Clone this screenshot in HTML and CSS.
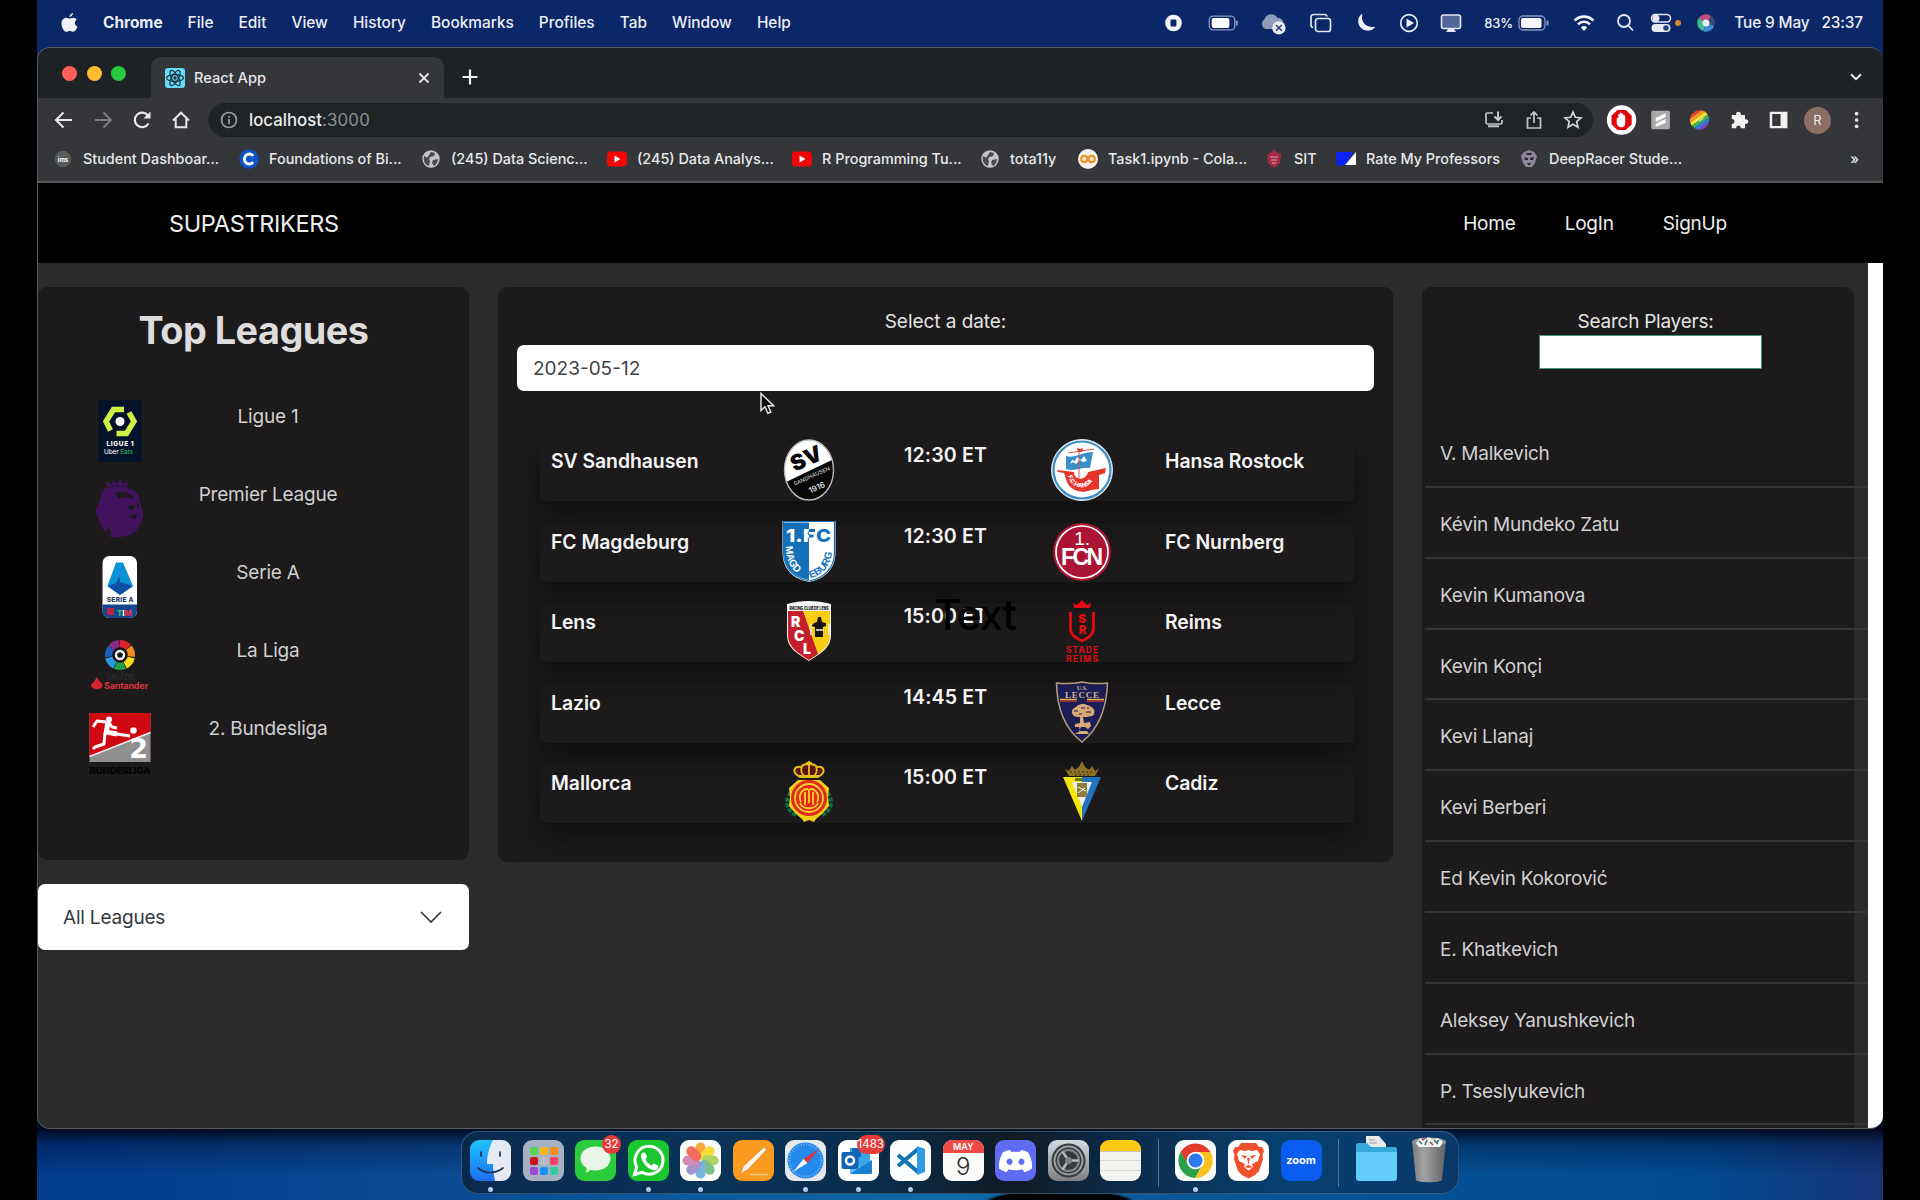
FILE: index.html
```html
<!DOCTYPE html>
<html lang="en">
<head>
<meta charset="utf-8">
<title>React App</title>
<link rel="stylesheet" href="styles.css">
</head>
<body>
<div class="desktop">
  <header class="menubar">
    <nav class="menus">
      <svg class="apple" viewBox="0 0 17 20"><path fill="#eef0f6" d="M12 0c.1 1.700-1.300 3.900-3.500 4.100C8.300 2.300 10.100.3 12 0zM8.700 5.600c.8 0 2-.9 3.700-.9 1.400 0 2.700.8 3.500 1.900-3 1.800-2.500 5.800.6 7-.8 2.300-2.500 5.200-4.300 5.200-1.300 0-1.800-.8-3.400-.8s-2.200.8-3.400.8C3.300 18.800.500 14.700.5 10.700.5 6.900 2.900 4.800 5.300 4.800c1.500 0 2.600.8 3.400.8z"/></svg>
      <b>Chrome</b><span>File</span><span>Edit</span><span>View</span><span>History</span><span>Bookmarks</span><span>Profiles</span><span>Tab</span><span>Window</span><span>Help</span>
    </nav>
    <div class="status">
      <svg class="w50" viewBox="-25 -12 50 24"><circle r="8.500" fill="#f2f4f8"/><rect x="-3" y="-3.500" width="6" height="7" rx="1" fill="#0b2767"/></svg>
      <svg class="w50" viewBox="-25 -12 50 24"><rect x="-13.500" y="-7" width="26" height="14" rx="4" fill="none" stroke="#8b99bd" stroke-width="1.300"/><rect x="-11" y="-5" width="18" height="10" rx="2" fill="#fff"/><path d="M14.500-2.500v5" stroke="#8b99bd" stroke-width="2"/></svg>
      <svg class="w50 cloud" viewBox="-25 -12 50 24"><path fill="#8f9cb9" d="M-8 6a5.500 5.500 0 0 1-1-10A7 7 0 0 1 4-5a5 5 0 0 1 6 5v6z"/><circle cx="5.500" cy="5" r="6.800" fill="#e8ecf4"/><path d="M2.500 2l6 6m0-6l-6 6" stroke="#223a72" stroke-width="1.500"/></svg>
      <svg class="w46" viewBox="-23 -12 46 24"><g fill="none" stroke="#dfe4ef" stroke-width="1.700"><rect x="-5.500" y="-4.500" width="15" height="13" rx="2.500"/><path d="M-8 4.500a2.500 2.500 0 0 1-2-2.500v-8a2.500 2.500 0 0 1 2.500-2.500h11A2.500 2.500 0 0 1 6-6.500"/></g></svg>
      <svg class="w44" viewBox="-22 -12 44 24"><path fill="#eef1f7" d="M-4.500-8A8.500 8.500 0 1 0 8 4.500 10.500 10.500 0 0 1-4.500-8z" stroke="#eef1f7" stroke-width="1.500" stroke-linejoin="round"/></svg>
      <svg class="w42" viewBox="-21 -12 42 24"><circle r="8.300" fill="none" stroke="#e8ecf4" stroke-width="1.700"/><path fill="#eef1f7" d="M-2.500-4.500L5 0l-7.500 4.500z"/></svg>
      <svg class="w42" viewBox="-21 -12 42 24"><rect x="-9.500" y="-8" width="19" height="13.500" rx="2" fill="#50669a" stroke="#e1e6f0" stroke-width="1.600"/><path fill="#e1e6f0" d="M-3 6h6l2 3h-10z"/></svg>
      <span class="pct">83%</span>
      <svg class="bat" viewBox="-17 -12 34 24"><rect x="-14" y="-7" width="26" height="14" rx="4" fill="none" stroke="#8b99bd" stroke-width="1.300"/><rect x="-12" y="-5" width="20.500" height="10" rx="2" fill="#f6f7fb"/><path d="M14.500-2.500v5" stroke="#8b99bd" stroke-width="2"/></svg>
      <svg class="wifi" viewBox="-21 -12 42 24"><g fill="none" stroke="#f0f2f8" stroke-width="2.600"><path d="M-9.500-2.500a13.500 13.500 0 0 1 19 0"/><path d="M-6 1.300a8.500 8.500 0 0 1 12 0"/></g><path fill="#f0f2f8" d="M-3.200 4.400a4.700 4.700 0 0 1 6.400 0L0 8z"/></svg>
      <svg class="w38" viewBox="-19 -12 38 24"><g fill="none" stroke="#e6e9f2" stroke-width="1.800"><circle cx="-1" cy="-2" r="6"/><path d="M3.300 2.500L8 7.500"/></g></svg>
      <svg class="ctl" viewBox="-19 -12 50 24"><rect x="-9.500" y="-8.500" width="19" height="7.500" rx="3.700" fill="none" stroke="#e6e9f2" stroke-width="1.500"/><circle cx="-5" cy="-4.700" r="3.500" fill="#e6e9f2"/><rect x="-9.500" y="1" width="19" height="8" rx="4" fill="#e6e9f2"/><circle cx="5" cy="5" r="2.700" fill="#25417e"/><circle cx="17" cy="0" r="3" fill="#d98a2b"/></svg>
      <svg class="siri" viewBox="-14 -12 28 24"><circle r="9" fill="#384a6b"/><path d="M0 0L-7-5A8.500 8.500 0 0 1 5-7z" fill="#c34a78"/><path d="M0 0L-7-5A8.500 8.500 0 0 0-3 8z" fill="#3fbf8a"/><path d="M0 0L-3 8A8.500 8.500 0 0 0 8 3z" fill="#3d8bd6"/><circle r="3.500" fill="#e7edf4"/></svg>
      <span class="date">Tue 9 May</span><span>23:37</span>
    </div>
  </header>

  <main class="window">
    <div class="tabstrip">
      <div class="lights"><i class="red"></i><i class="amber"></i><i class="green"></i></div>
      <div class="tab">
        <svg class="fav" viewBox="0 0 20 20"><rect width="20" height="20" rx="3" fill="#61dafb"/><g fill="none" stroke="#20343c" stroke-width="1.200"><ellipse cx="10" cy="10" rx="8.500" ry="3.300"/><ellipse cx="10" cy="10" rx="8.500" ry="3.300" transform="rotate(60 10 10)"/><ellipse cx="10" cy="10" rx="8.500" ry="3.300" transform="rotate(120 10 10)"/></g><circle cx="10" cy="10" r="1.700" fill="#20343c"/></svg>
        <span>React App</span>
        <svg class="close" viewBox="0 0 12 12"><path d="M1.500 1.500l9 9m0-9l-9 9" stroke="#e3e4e6" stroke-width="1.800"/></svg>
      </div>
      <svg class="plus" viewBox="0 0 16 16"><path d="M8 .500v15M.5 8h15" stroke="#f1f1f1" stroke-width="2.200"/></svg>
      <svg class="chev" viewBox="0 0 12 8"><path d="M1 1.200l5 5 5-5" fill="none" stroke="#e8e8e8" stroke-width="2"/></svg>
    </div>

    <div class="toolbar">
      <svg class="tool" viewBox="-12 -12 24 24"><path d="M8 0H-7M-.5-7.500L-8 0l7.500 7.500" fill="none" stroke="#e6e7e9" stroke-width="2"/></svg>
      <svg class="tool" viewBox="-12 -12 24 24"><path d="M-8 0H7M.5-7.500L8 0 .5 7.500" fill="none" stroke="#7c7e82" stroke-width="1.800"/></svg>
      <svg class="tool" viewBox="-12 -12 24 24"><path d="M6.500 3.500A7.300 7.300 0 1 1 6-4.500" fill="none" stroke="#e6e7e9" stroke-width="2.200"/><path d="M8.500-8.500v7h-7z" fill="#e6e7e9"/></svg>
      <svg class="tool" viewBox="-12 -12 24 24"><path d="M-8 .500L0-7.300 8 .5M-5.300-1v8.200H5.300V-1" fill="none" stroke="#e6e7e9" stroke-width="2"/></svg>
      <div class="omnibox">
        <svg class="info" viewBox="-9 -9 18 18"><circle r="7.500" fill="none" stroke="#9a9da1" stroke-width="1.700"/><path d="M0-1v5M0-4v1.800" stroke="#9a9da1" stroke-width="1.800"/></svg>
        <span class="host">localhost</span><span class="port">:3000</span>
        <div class="omni-icons">
          <svg viewBox="-12 -12 24 24"><path d="M-1-7h-5.500a1.500 1.500 0 0 0-1.500 1.500v8A1.500 1.500 0 0 0-6.500 4h13A1.500 1.500 0 0 0 8 2.500V0" fill="none" stroke="#c4c6c9" stroke-width="1.700"/><path d="M-6 6.300h11M4-8.500v8M.500-3.500L4 0l3.500-3.500" fill="none" stroke="#c4c6c9" stroke-width="2"/></svg>
          <svg viewBox="-12 -12 24 24"><path d="M-3-2h-3.500V8h13V-2H3M0 3V-7.500M-3.500-4.500L0-8l3.500 3.500" fill="none" stroke="#c4c6c9" stroke-width="1.700"/></svg>
          <svg viewBox="-12 -12 24 24"><path d="M0-8L2.300-2.700 8-2.200 3.700 1.600 5 7.200 0 4.200-5 7.200-3.700 1.600-8-2.200-2.300-2.700z" fill="none" stroke="#d2d3d5" stroke-width="1.700"/></svg>
        </div>
      </div>
      <div class="ext">
        <svg viewBox="-20 -16 40 32"><circle r="15" fill="#fff"/><path fill="#e10808" d="M-4.300-10.300h8.600l6 6v8.600l-6 6h-8.600l-6-6v-8.600z"/><path fill="#fff" d="M-5-1.500c0-1.200 1.600-1.200 1.600 0v-3.800c0-1.300 1.700-1.300 1.700 0v-1.200c0-1.400 1.900-1.400 1.900 0v1c0-1.300 1.800-1.300 1.800 0v1.500c0-1.200 1.700-1.200 1.700 0v7C3.700 6 2 7.500 0 7.500S-5 5.500-5 3z"/></svg>
        <svg viewBox="-20 -16 40 32"><rect x="-9.500" y="-9.500" width="19" height="19" rx="1.500" fill="#a7a9ab"/><path fill="#fff" d="M5-7L-5-2v4L5-3zM5-1L-5 4v3L5 3z"/></svg>
        <svg viewBox="-20 -16 40 32"><g stroke-width="3.500" transform="rotate(-35)"><clipPath id="rb"><circle r="10"/></clipPath><g clip-path="url(#rb)"><path d="M-12-8.500h24" stroke="#e8442e"/><path d="M-12-5h24" stroke="#f59a23"/><path d="M-12-1.600h24" stroke="#f6e339"/><path d="M-12 1.800h24" stroke="#43b649"/><path d="M-12 5.200h24" stroke="#2f7de0"/><path d="M-12 8.600h24" stroke="#8e3fc0"/></g></g><path d="M-4 2l2-3 2 2 4-3" stroke="#f4f4d0" fill="none"/></svg>
        <svg viewBox="-20 -16 40 32"><path fill="#f1f1f2" d="M-8-5h4.500C-4.500-9.500 2-9.500 1.200-5H5.500v4.300c4.500-.8 4.500 5.500 0 4.700V8.500H1.200C1.700 4.500-3.800 4.500-3.400 8.500H-8V4C-4.300 4-4.300-1-8-1z"/></svg>
        <svg viewBox="-20 -16 40 32"><path fill="#f1f1f2" fill-rule="evenodd" d="M-9-8.500H9v17H-9zM-6.500-6v12H2V-6z"/></svg>
        <span class="avatar">R</span>
        <svg viewBox="-20 -16 40 32"><g fill="#e3e4e6"><circle cy="-6.500" r="1.900"/><circle r="1.900"/><circle cy="6.500" r="1.900"/></g></svg>
      </div>
    </div>

    <div class="bookmarks">
      <div class="bm"><svg viewBox="-10 -10 20 20"><circle r="8.300" fill="#58595a"/><text class="t-ims" y="2.500" text-anchor="middle">ims</text></svg><span style="width:136px">Student Dashboar...</span></div>
      <div class="bm"><svg viewBox="-10 -10 20 20"><circle r="9.800" fill="#0b53c6"/><path d="M4.200-3.200a5 5 0 1 0 0 6.400" fill="none" stroke="#fff" stroke-width="2.800"/></svg><span style="width:132px">Foundations of Bi...</span></div>
      <div class="bm"><svg viewBox="-10 -10 20 20"><circle r="8.700" fill="#c3c5c8"/><path fill="#4a4b4f" d="M-7-3l4 2 2 3-1 5c-4-1-6-5-5-10zM0-7l4 1-1 3-4 1-1 3-2-2zM2 1l5-1c0 3-2 6-4 7L1 4z"/></svg><span style="width:136px">(245) Data Scienc...</span></div>
      <div class="bm"><svg viewBox="-10 -10 20 20"><rect x="-10" y="-7.500" width="20" height="15" rx="4" fill="#f40505"/><path fill="#fff" d="M-2.500-3.500L3.500 0l-6 3.500z"/></svg><span style="width:135px">(245) Data Analys...</span></div>
      <div class="bm"><svg viewBox="-10 -10 20 20"><rect x="-10" y="-7.500" width="20" height="15" rx="4" fill="#f40505"/><path fill="#fff" d="M-2.500-3.500L3.500 0l-6 3.500z"/></svg><span style="width:138px">R Programming Tu...</span></div>
      <div class="bm"><svg viewBox="-10 -10 20 20"><circle r="8.700" fill="#c3c5c8"/><path fill="#4a4b4f" d="M-7-3l4 2 2 3-1 5c-4-1-6-5-5-10zM0-7l4 1-1 3-4 1-1 3-2-2zM2 1l5-1c0 3-2 6-4 7L1 4z"/></svg><span style="width:48px">tota11y</span></div>
      <div class="bm"><svg viewBox="-10 -10 20 20"><circle r="10" fill="#f6f1ec"/><g fill="none" stroke="#f0921e" stroke-width="2.200"><circle cx="-3.700" r="3.200"/><circle cx="3.700" r="3.200"/></g></svg><span style="width:136px">Task1.ipynb - Cola...</span></div>
      <div class="bm"><svg viewBox="-10 -10 20 20"><path fill="#a52a48" d="M-1-8l1-2 2 3 5 2-1 9-6 5-6-5-1-8z"/><path stroke="#d8a4b2" d="M-4-2h8M-3 1h6M-2 4h4"/></svg><span style="width:22px">SIT</span></div>
      <div class="bm"><svg viewBox="-10 -10 20 20"><path fill="#0a22f5" d="M-10-7H7L0 6-9 7z"/><path fill="#fff" d="M10-7v13H-1z"/></svg><span style="width:133px">Rate My Professors</span></div>
      <div class="bm"><svg viewBox="-10 -10 20 20"><path fill="#8d8797" d="M-5-7l5-2 5 2 3 4-2 7-3 4h-6l-3-4-2-7z"/><path fill="#2a2730" d="M-5-2l4 1v2h-3zM5-2L1-1v2h3zM-2 4h4l-1 2h-2zM-3-6h6l-1 2h-4z"/></svg><span style="width:133px">DeepRacer Stude...</span></div>
      <span class="more">»</span>
    </div>

    <div class="page">
      <nav class="navbar">
        <span class="brand">SUPASTRIKERS</span>
        <div class="links"><a>Home</a><a>LogIn</a><a>SignUp</a></div>
      </nav>
      <div class="scroller">
        <div class="content">
          <aside class="left">
            <section class="card leagues">
              <h1>Top Leagues</h1>
              <ul>
                <li><svg viewBox="0 0 62 62"><path fill="#04122a" d="M9.500 0h43v62h-43z"/><g fill="none" stroke="#cdf045" stroke-width="5.500"><path d="M35 9.500H24.500L17 21.500l4.500 9"/><path d="M27.500 33.500h10L45 21.500l-5-9"/></g><circle cx="31" cy="21.500" r="4.500" fill="#fff"/><text class="t-lg" x="31" y="45.500" text-anchor="middle" textLength="27">LIGUE 1</text><text class="t-ub" x="15" y="53.500">Uber<tspan fill="#2f9d5c"> Eats</tspan></text></svg><span>Ligue 1</span></li>
                <li><svg viewBox="0 0 62 62"><path fill="#43125f" d="M18 9l-1-6 5 4 2-5 4 4 3-5 3 5 4-3 1 7c9 3 13 9 12 16l3 8c1 9-4 14-7 19-6 5-15 7-26 6l1-5-2-6-4 6-5-9c-2-6-5-9-4-14l4-9c1-7 4-11 7-13z"/><path fill="#1c1a1b" d="M26 16c6-4 15-3 19 5-7-2-11-3-15 0zM37 28l9-1-2 6zM40 38l9-2-3 5zM48 24l3 7-3-1z"/><path d="M18 10c8-3 15-3 22 0" stroke="#2a1537" stroke-width="1.500" fill="none"/></svg><span>Premier League</span></li>
                <li><svg viewBox="0 0 62 62"><rect x="13.500" width="34.500" height="62" rx="7" fill="#fff"/><path fill="#15478f" d="M13.500 48.500h34.500V55a7 7 0 0 1-7 7H20.500a7 7 0 0 1-7-7z"/><path fill="#0b91d6" d="M27 6.500h7L44 30 31 39 18.500 30z"/><path fill="#0f4fa1" d="M18.500 30l12-4 13.500 4-13 9zM30 20l2 10-7 4z"/><text class="t-sa" x="31" y="46" text-anchor="middle" textLength="26.500">SERIE A</text><path fill="#b72543" d="M18 52h7v7h-7z"/><text class="t-tim" x="28" y="59.500"><tspan fill="#39b878">T</tspan><tspan fill="#fff">I</tspan><tspan fill="#e2343f">M</tspan></text></svg><span>Serie A</span></li>
                <li><svg viewBox="0 0 62 62"><g fill="none" stroke-width="8" transform="translate(31 20)"><path stroke="#8a2a86" d="M-8.500-7a11 11 0 0 1 8-4"/><path stroke="#e0222c" d="M0-11a11 11 0 0 1 8 3.500"/><path stroke="#f08a1c" d="M8.500-7a11 11 0 0 1 2.400 8.500"/><path stroke="#f6da1c" d="M10.800 2.500A11 11 0 0 1 5 9.800"/><path stroke="#26a048" d="M4.500 10a11 11 0 0 1-9 0"/><path stroke="#2a9be0" d="M-5 9.800A11 11 0 0 1-10.800 2.500"/><path stroke="#1d5cb8" d="M-11 1.700a11 11 0 0 1 2.400-8.500"/></g><circle cx="31" cy="20" r="6.500" fill="#f4f4f4" stroke="#111" stroke-width="2.500"/><path d="M31 17l3 2-1 3.500h-4L28 19z" fill="#111"/><text class="t-ll" x="31" y="43.500" text-anchor="middle">LaLiga</text><path fill="#d8242e" d="M2 51c0-3 3-3 4-6l2-3 2 4c3 2 4 3 3 6-2 3-9 3-11-1z"/><text class="t-sn" x="15" y="54" textLength="44" lengthAdjust="spacingAndGlyphs">Santander</text></svg><span>La Liga</span></li>
                <li><svg viewBox="0 0 62 62"><path fill="#8f8f90" d="M.5 0h61v49H.5z"/><path fill="#cf0812" d="M.5 0h61v19L.5 44z"/><path stroke="#eee" stroke-width="1.500" d="M.5 43.500l61-24"/><g fill="none" stroke="#fff" stroke-linejoin="round"><path stroke-width="5" d="M19 9l-2 12M17 19l11 2"/><path stroke-width="3" d="M17 9l-9-1-4 6M19 8l4 6 5 1M28 21l13 2M16 20l-1 11-9 3-2 2"/></g><circle cx="20" cy="6.500" r="3" fill="#fff"/><circle cx="44.500" cy="17.500" r="3.200" fill="#fff"/><text class="t-two" x="49.500" y="45" text-anchor="middle">2</text><text class="t-bl" x="31" y="61" text-anchor="middle" textLength="61" lengthAdjust="spacingAndGlyphs">BUNDESLIGA</text></svg><span>2. Bundesliga</span></li>
              </ul>
            </section>
            <div class="dropdown"><span>All Leagues</span><svg viewBox="0 0 22 12"><path d="M1 1l10 10L21 1" fill="none" stroke="#343a40" stroke-width="1.700"/></svg></div>
          </aside>

          <section class="card matches">
            <label>Select a date:</label>
            <div class="dateinput">2023-05-12</div>
            <div class="rows">
              <div class="match"><b class="home">SV Sandhausen</b>
                <svg class="crest" viewBox="0 0 62 62"><defs><clipPath id="sv"><ellipse cx="31" cy="31" rx="24.500" ry="30"/></clipPath></defs><ellipse cx="31" cy="31" rx="24.500" ry="30" fill="#fff"/><path clip-path="url(#sv)" fill="#060606" d="M0 47l62-30v47H0z"/><ellipse cx="31" cy="31" rx="24.500" ry="30" fill="none" stroke="#b9b9b9" stroke-width="1.400"/><g transform="rotate(-24 31 31)"><text class="t-sv" x="33" y="27" text-anchor="middle">SV</text><text class="t-sh" x="31" y="39.500" text-anchor="middle" textLength="39">SANDHAUSEN</text><text class="t-19" x="31" y="53" text-anchor="middle">1916</text></g></svg>
                <b class="time">12:30 ET</b>
                <svg class="crest" viewBox="0 0 62 62"><circle cx="31" cy="31" r="30.500" fill="#fff" stroke="#d9e6ef"/><circle cx="31" cy="31" r="28.500" fill="none" stroke="#3f8cc4" stroke-width="2.200"/><path fill="#3a8dcb" d="M15 17c8 3 16-4 27-4l-3 16c-8-1-16 4-24 1z"/><path d="M19 25l2-4 3 1 2-4 4 3 3-4 3 5-4 1-3-2-4 4-3-2z" fill="#fff"/><path fill="#e5352c" d="M26 9l3 1 3-1-1 4h-4zM6 31l17 2c0 9 12 9 14 0l18-4-1 5-6 2v14l-8 1c-9 4-20 1-24-8l-3-9-6-1z"/><path d="M28 12v28M17 14l26-4" stroke="#d5564c"/><path id="ha" fill="none" d="M17 37c3 15 24 16 27-2"/><text class="t-ha"><textPath href="#ha">F.C.HANSA</textPath></text></svg>
                <b class="away">Hansa Rostock</b></div>
              <div class="match"><b class="home">FC Magdeburg</b>
                <svg class="crest" viewBox="0 0 62 62"><path fill="#fff" d="M4.500 1h53v31c0 17-11 27-26.500 30C15 59 4.500 49 4.500 32z"/><path fill="#1470b9" d="M6 2.500h25V60C15 57 6 47 6 32z"/><path fill="none" stroke="#1470b9" stroke-width="1.200" d="M5.500 1.500h51V32c0 16-10 26-25.500 29C16 58 5.500 48 5.500 32z"/><text class="t-1fc" x="8" y="22" fill="#fff" textLength="29" lengthAdjust="spacingAndGlyphs">1.F</text><text class="t-1fc" x="38" y="22" fill="#1470b9" textLength="15" lengthAdjust="spacingAndGlyphs">C</text><path d="M31 10.500h6M31 16h4.500" stroke="#1470b9" stroke-width="2.800"/><path id="mga" fill="none" d="M8 26C8 44 16 55 31 58"/><path id="mgb" fill="none" d="M32 58C46 55 54.500 44 54.500 26"/><text class="t-mg" fill="#fff"><textPath href="#mga">MAGD</textPath></text><text class="t-mg" fill="#1470b9"><textPath href="#mgb">EBURG</textPath></text></svg>
                <b class="time">12:30 ET</b>
                <svg class="crest" viewBox="0 0 62 62"><circle cx="31" cy="32" r="29" fill="#ab1433"/><circle cx="31" cy="32" r="26" fill="none" stroke="#fff" stroke-width="1.700"/><text class="t-n1" x="31" y="25" text-anchor="middle">1.</text><text class="t-fcn" x="31" y="45" text-anchor="middle" textLength="42">FCN</text></svg>
                <b class="away">FC Nurnberg</b></div>
              <div class="match"><b class="home">Lens</b>
                <svg class="crest" viewBox="0 0 62 62"><path fill="#f4f4f4" d="M9 4c14-4 30-4 44 0v31c0 14-12 19-22 26C21 54 9 49 9 35z"/><path fill="#f8cd12" d="M10 11h42v24c0 12-10 18-21 25C20 53 10 47 10 35z"/><path fill="#c41f2c" d="M10 11h15l15 43c-3 2-6 4-9 6C20 53 10 47 10 35z"/><text class="t-rc" x="31" y="9.500" text-anchor="middle" textLength="39" lengthAdjust="spacingAndGlyphs">RACING CLUB DE LENS</text><text class="t-rcl" x="13" y="27">R</text><text class="t-rcl" x="16" y="41">C</text><text class="t-rcl" x="25" y="54">L</text><path fill="#171512" d="M36 23l3-1 1-5h3l1 5 4 1v3l-3 1v10h-8V27l-4-1z"/><path stroke="#eee" stroke-width="1.500" d="M33 24v11M51 24v11M38 30h8"/></svg>
                <b class="time">15:00 ET</b>
                <svg class="crest" viewBox="0 0 62 62"><g fill="#e30a12"><path d="M23 8l-1-5 4 2 2-2 3-3 3 3 2 2 4-2-1 5z"/><path d="M19.500 12v16c0 8 6 10 11.500 13 6-3 11.500-6 11.500-13V12" fill="none" stroke="#e30a12" stroke-width="2.800"/><text class="t-s" x="31" y="22.500" text-anchor="middle">S</text><text class="t-s" x="31.500" y="34" text-anchor="middle">R</text><text class="t-st" x="31" y="52.500" text-anchor="middle" textLength="32">STADE</text><text class="t-st" x="31" y="61.500" text-anchor="middle" textLength="32">REIMS</text></g></svg>
                <b class="away">Reims</b></div>
              <div class="match"><b class="home">Lazio</b>
                <span class="crest"></span>
                <b class="time">14:45 ET</b>
                <svg class="crest" viewBox="0 0 62 62"><path fill="#1c1d52" stroke="#b39d7c" stroke-width="1.500" d="M5.500 2c9 1 17 1 25.500-1 9 2 17 2 25.500 1-1 27-9 46-25.500 59C14 48 6 29 5.500 2z"/><text class="t-us" x="31" y="8.500" text-anchor="middle">U.S.</text><text class="t-le" x="31" y="16.500" text-anchor="middle" textLength="34">LECCE</text><path stroke="#d9b340" stroke-width="1.500" d="M9 18.500h44"/><path stroke="#b43b3a" stroke-width="1.500" d="M9 20h44"/><path fill="#1c1d52" d="M26 17h10v5H26z"/><path fill="#d8a877" d="M21 32c-1-4 3-5 5-7 4-3 8-2 10-1 4 1 9 4 7 9-1 3-5 2-7 3h-4l1 6 6-1 1 4-3 3-3-2h-4l-2 4h8l2 3H24l5-3-1-4h-4v-3l5-1V36c-3 0-7 0-8-4z"/><path stroke="#1c1d52" d="M23 30h4M30 27h4M35 31h5M28 33h3M36 27h2"/></svg>
                <b class="away">Lecce</b></div>
              <div class="match"><b class="home">Mallorca</b>
                <svg class="crest" viewBox="0 0 62 62"><path d="M13 32c-7 9-3 18 6 22M49 32c7 9 3 18-6 22" fill="none" stroke="#0e6e44" stroke-width="5" stroke-dasharray="4 1.500"/><path fill="#f2cf19" d="M20 19h22l9 8-1 9 1 9-7 8-6 5-2 3-5-2-5 2-2-3-6-5-7-8 1-9-1-9z"/><circle cx="31" cy="37" r="18" fill="#e42a1c"/><g fill="none" stroke="#f5d22c" stroke-width="1.800"><circle cx="31" cy="37" r="14"/><path d="M23 41c-3-6 0-13 7-13M39 41c3-6 0-13-7-13M27 31v13M31 28v14M35 31v13M22 42c3 7 15 7 18 0"/></g><path fill="#5a1512" stroke="#e2bf1d" stroke-width="2" d="M22 16c-9-5-6-11 1-10 2-3 5-3 8-3s6 0 8 3c7-1 10 5 1 10z"/><path fill="none" stroke="#e2bf1d" stroke-width="1.800" d="M31 0v14M24 6c-2 4 0 7 2 9M38 6c2 4 0 7-2 9M28 2h6M21 15h20"/></svg>
                <b class="time">15:00 ET</b>
                <svg class="crest" viewBox="0 0 62 62"><path fill="#f4e70c" d="M12 16h19v44z"/><path fill="#2173bd" d="M50 16H31v44z"/><path fill="#e9edf0" d="M21 21h20L31 46z"/><path fill="#8b7d3a" d="M26 22h10v14H26z"/><path stroke="#f3f3f3" d="M27 26l8 4M27 32l7-5"/><path d="M24 17h8v3h-8z" fill="#5b7a24"/><path fill="#8f7125" d="M18 15l-4-7 4 2 3-5 3 4 4-3 3-6 3 6 4 3 3-4 3 5 4-2-4 7z"/><path stroke="#382d10" d="M19 11h24M24 14h14" stroke-dasharray="2 2"/></svg>
                <b class="away">Cadiz</b></div>
            </div>
          </section>

          <section class="card players">
            <div class="search"><label>Search Players:</label><div class="searchinput"></div></div>
            <ul>
              <li>V. Malkevich</li><li>Kévin Mundeko Zatu</li><li>Kevin Kumanova</li><li>Kevin Konçi</li><li>Kevi Llanaj</li><li>Kevi Berberi</li><li>Ed Kevin Kokorović</li><li>E. Khatkevich</li><li>Aleksey Yanushkevich</li><li>P. Tseslyukevich</li>
            </ul>
          </section>
        </div>
        <div class="gutter"></div>
      </div>
    </div>
  </main>

  <footer class="dock">
    <div class="app run"><svg viewBox="0 0 41 41"><defs><linearGradient id="fb" x2="0" y2="1"><stop stop-color="#1fc4fb"/><stop offset="1" stop-color="#1d6ff2"/></linearGradient><clipPath id="fr"><rect width="41" height="41" rx="9"/></clipPath></defs><g clip-path="url(#fr)"><path fill="url(#fb)" d="M0 0h41v41H0z"/><path fill="#e6e9f2" d="M23 0c-4 8-6 15-6 24h6c0 6 1 12 2 17h16V0z"/><g fill="none" stroke="#223354" stroke-width="1.700" stroke-linecap="round"><path d="M11 12v4M30 12v4M8 28c7 6 17 6 25 0"/></g></g></svg></div>
    <div class="app"><svg viewBox="0 0 41 41"><rect width="41" height="41" rx="9" fill="#a5b0c2"/><rect x="7" y="7" width="8" height="8" rx="2" fill="#55d44f"/><rect x="17" y="7" width="8" height="8" rx="2" fill="#fbb616"/><rect x="27" y="7" width="8" height="8" rx="2" fill="#f88c17"/><rect x="7" y="17" width="8" height="8" rx="2" fill="#c9141d"/><rect x="17" y="17" width="8" height="8" rx="2" fill="#b9bdc2"/><rect x="27" y="17" width="8" height="8" rx="2" fill="#fb4168"/><rect x="7" y="27" width="8" height="8" rx="2" fill="#9b48d8"/><rect x="17" y="27" width="8" height="8" rx="2" fill="#1a8cf6"/><rect x="27" y="27" width="8" height="8" rx="2" fill="#33cba0"/></svg></div>
    <div class="app"><svg viewBox="0 0 41 41"><rect width="41" height="41" rx="9" fill="#2ccb3c"/><path fill="#e9f7ea" d="M20.500 6.500c9 0 15 5.500 15 12s-6 12-15 12c-2 0-3.500-.2-5-.700-1.500 1.600-3 2.500-5 2.700 1-1.500 1.300-3 1-4.800-4-2-6-5.400-6-9.200 0-6.500 6-12 15-12z"/></svg><span class="badge">32</span></div>
    <div class="app run"><svg viewBox="0 0 41 41"><rect width="41" height="41" rx="9" fill="#1bc72f"/><path fill="none" stroke="#fff" stroke-width="3" d="M6.500 34.500l2.300-7.500A14 14 0 1 1 14 32.300z"/><path fill="#fff" d="M13 15c.5-2.500 3.500-3.500 4.500-1.500l1.500 3.500-1.500 2.500c1.500 3 3 4.500 6 6l2.300-2 4 2c1.500 1-.5 4.500-3.500 4.700C20 30 12.500 21.500 13 15z"/></svg></div>
    <div class="app run"><svg viewBox="0 0 41 41"><rect width="41" height="41" rx="9" fill="#fcfcfb"/><g transform="translate(20.500 20.500)" opacity=".88"><rect x="-5" y="-18" width="10" height="17" rx="5" fill="#f99a1c"/><rect x="-5" y="-18" width="10" height="17" rx="5" fill="#f1da1f" transform="rotate(45)"/><rect x="-5" y="-18" width="10" height="17" rx="5" fill="#a3d14a" transform="rotate(90)"/><rect x="-5" y="-18" width="10" height="17" rx="5" fill="#6cb97a" transform="rotate(135)"/><rect x="-5" y="-18" width="10" height="17" rx="5" fill="#69acdf" transform="rotate(180)"/><rect x="-5" y="-18" width="10" height="17" rx="5" fill="#9a85c8" transform="rotate(225)"/><rect x="-5" y="-18" width="10" height="17" rx="5" fill="#cd7fae" transform="rotate(270)"/><rect x="-5" y="-18" width="10" height="17" rx="5" fill="#f2574a" transform="rotate(315)"/></g></svg></div>
    <div class="app"><svg viewBox="0 0 41 41"><rect width="41" height="41" rx="9" fill="#fa9a1f"/><path fill="#fdf3e4" stroke="#c9761b" stroke-width=".6" d="M31 7l3 2.500L15 29.500 7 34l3.500-8z"/><path stroke="#fcd08e" stroke-width="1.500" d="M17 34.500h18"/></svg></div>
    <div class="app run"><svg viewBox="0 0 41 41"><rect width="41" height="41" rx="9" fill="#e6e8ec"/><circle cx="20.500" cy="20.500" r="18" fill="#2389ea"/><circle cx="20.500" cy="20.500" r="16" fill="none" stroke="#8cc4f6" stroke-width="2" stroke-dasharray=".8 1.800"/><path fill="#e6323c" d="M34 9L22.500 23l-4-4z"/><path fill="#f5f5f7" d="M8 32l10.500-13 4 4z"/></svg></div>
    <div class="app run"><svg viewBox="0 0 41 41"><rect width="41" height="41" rx="9" fill="#fff"/><path fill="#38a8ea" d="M12 8h20v24H12z"/><path fill="#1666b8" d="M14 8h9v9h-9z"/><path fill="#50c3f6" d="M12 20l11 7 11-7v14H12z"/><path fill="#1a7fd2" d="M12 34l22-14v12a2 2 0 0 1-2 2z"/><rect x="3.500" y="12" width="17" height="17" rx="2" fill="#1263b5"/><circle cx="12" cy="20.500" r="4" fill="none" stroke="#fff" stroke-width="2.500"/></svg><span class="badge wide">1483</span></div>
    <div class="app run"><svg viewBox="0 0 41 41"><rect width="41" height="41" rx="9" fill="#fcfdfe"/><path fill="none" stroke="#1272ba" stroke-width="4" d="M28 9L8 26M8 15l20 17"/><path fill="#2f9be3" d="M27 6l8 3v23l-8 3z"/></svg></div>
    <div class="app cal"><span class="month">MAY</span><span class="day">9</span></div>
    <div class="app"><svg viewBox="0 0 41 41"><rect width="41" height="41" rx="9" fill="#5f6bf0"/><path fill="#fff" fill-rule="evenodd" d="M15 10l1.500 2c2.500-.5 5.500-.5 8 0L26 10c2.500.4 4.800 1.100 7 2.200 3 5 4.500 10.500 4 16.300-2.500 1.900-5 3-7.700 3.700l-1.800-2.900c-4.500 1.400-9.500 1.400-14 0l-1.800 2.900C9 31.500 6.500 30.400 4 28.500 3.500 22.500 5 17 8 12.200c2.200-1.100 4.500-1.800 7-2.200zM14.500 18.500a3 3.200 0 1 0 .1 0zM26.500 18.500a3 3.200 0 1 0 .1 0z"/></svg></div>
    <div class="app"><svg viewBox="0 0 41 41"><defs><linearGradient id="st" x2="0" y2="1"><stop stop-color="#d3dbe2"/><stop offset="1" stop-color="#7d7f82"/></linearGradient></defs><rect width="41" height="41" rx="9" fill="url(#st)"/><circle cx="20.500" cy="20.500" r="17" fill="#37393d"/><circle cx="20.500" cy="20.500" r="14" fill="none" stroke="#9b9ea2" stroke-width="2"/><circle cx="20.500" cy="20.500" r="10.500" fill="none" stroke="#85898d" stroke-width="2"/><path d="M20.500 20.500l10 0M20.500 20.500l-6-9M20.500 20.500l-6 9" stroke="#b5b8bb" stroke-width="2.500"/><circle cx="20.500" cy="20.500" r="3.500" fill="#7f8387"/></svg></div>
    <div class="app notes"></div>
    <i class="sep"></i>
    <div class="app run"><svg viewBox="0 0 41 41"><rect width="41" height="41" rx="9" fill="#f7f8f8"/><path fill="#e33b2e" d="M5.500 12a17.500 17.500 0 0 1 30 0H20.500v8.500l-7.500 4.500z"/><path fill="#fcc21b" d="M35.500 12A17.500 17.500 0 0 1 20 38l8-14-3-12z"/><path fill="#2da04d" d="M5.500 12A17.500 17.500 0 0 0 20 38l7.500-13.500h-14z"/><circle cx="20.500" cy="20.500" r="8.800" fill="#fff"/><circle cx="20.500" cy="20.500" r="7" fill="#3079e8"/></svg></div>
    <div class="app"><svg viewBox="0 0 41 41"><rect width="41" height="41" rx="9" fill="#fff"/><path fill="#f0502a" d="M13 3h15l3 4h3l2 4-1.500 4 .5 4-4 12-4 4-6.500 3.500L14 35l-4-4-4-12 .5-4L5 11l2-4h3z"/><path fill="#fff" d="M12 10l5 1 3.500-1 3.500 1 5-1 3 4-2 7-6 3 1 3-4.500 3.500L16 27l1-3-6-3-2-7z"/><path fill="#f0502a" d="M13 15l6 1-2 3zM28 15l-6 1 2 3zM19 18h3l-1.500 7zM16 27l4.500-2 4.500 2-4.500 1z"/></svg></div>
    <div class="app zoomapp">zoom</div>
    <i class="sep"></i>
    <div class="app folder"><svg viewBox="0 0 43 46"><path fill="#e9eaea" d="M11 0h13l7 8v10H11z"/><path stroke="#999" d="M14 4h6M14 7h8"/><path fill="#38a9da" d="M1 9a2 2 0 0 1 2-2h9l4 4h24a2 2 0 0 1 2 2v8H1z"/><path fill="#62cdf9" d="M1 16h41v26a3 3 0 0 1-3 3H4a3 3 0 0 1-3-3z"/></svg></div>
    <div class="app trash"><svg viewBox="0 0 36 48"><defs><linearGradient id="tr"><stop stop-color="#77797b"/><stop offset=".35" stop-color="#a0a2a3"/><stop offset="1" stop-color="#5f6163"/></linearGradient></defs><path fill="url(#tr)" d="M1 5h34l-4 39c-1 3-25 3-26 0z"/><ellipse cx="18" cy="6" rx="17" ry="4.500" fill="#8f9294"/><path fill="#f2f3f3" d="M5 7l4-5 5 2 3-3 5 2 5-1 5 4-3 5-7 0-8 0-6 0z"/><path d="M8 5l3 3M16 4l-2 5M23 4l4 4M28 4l-2 2" stroke="#3c6f66" stroke-width="1.500"/><path d="M19 6l3 3M11 3l2 1" stroke="#b4472f" stroke-width="1.500"/></svg></div>
  </footer>
</div>
<div class="ghost">Text</div>
<svg class="cursor" viewBox="0 0 15 23"><path fill="#0a0a0a" stroke="#e4e4e4" stroke-width="1.500" d="M1 1.500v17l4-3.700 2.800 6.500 3-1.300-2.700-6.300h5.500z"/></svg>
</body>
</html>
```
FILE: styles.css
```css
* { box-sizing: border-box; }
body { margin: 0; background: #000; color: #d0d0d0; font-family: Inter, "Liberation Sans", sans-serif; width: 1920px; height: 1200px; overflow: hidden; position: relative; }
svg { display: block; flex: none; }
ul { list-style: none; margin: 0; padding: 0; }
b { font-weight: 600; }

.desktop { width: 1846px; height: 1200px; margin-left: 37px; overflow: hidden; background:
  radial-gradient(ellipse 76px 12px at 1023px 1202px, #000 0 90%, transparent 100%),
  linear-gradient(180deg, #0b2767 0 1110px, rgba(0, 0, 10, .85) 1128px, rgba(0, 10, 40, .35) 1145px, transparent 1175px),
  linear-gradient(90deg, #023a8c, #0a4a94 22%, #0c6aa8 50%, #0a5798 62%, #004a92 90%, #173578); }

/* menu bar */
.menubar { height: 47px; display: flex; justify-content: space-between; align-items: center; padding: 0 20px 2px 24px; font-size: 15.400px; font-weight: 500; color: #eceef5; }
.menus, .status { display: flex; align-items: center; white-space: nowrap; }
.menus { gap: 25.050px; }
.menus b { font-weight: 700; }
.apple { width: 17px; height: 20px; }
.status { letter-spacing: -.15px; }
.status svg { height: 24px; }
.w50 { width: 49px; } .w46 { width: 46px; } .w44 { width: 44px; } .w42 { width: 42px; } .w38 { width: 38px; margin-left: 1px; }
.status .cloud { margin-left: 2px; }
.pct { font-size: 13px; width: 31px; margin-left: 12px; }
.bat { width: 34px; margin-left: 1px; } .wifi { width: 42px; margin-left: 13px; }
.ctl { width: 50px; margin-left: -2px; } .siri { width: 28px; } .date { margin: 0 12px 0 14px; }

/* browser window */
.window { height: 1082px; border: solid #5a5b5c; border-width: 1px 0 1px 1px; border-radius: 13px; overflow: hidden; background: #35363a; display: flex; flex-direction: column; }
.tabstrip { height: 50px; flex: none; background: #1f2224; display: flex; align-items: center; padding: 0 21px 0 24px; }
.lights { display: flex; gap: 9.500px; width: 89px; }
.lights i { width: 15px; height: 15px; border-radius: 50%; }
.red { background: #ff5f57; } .amber { background: #febc2e; } .green { background: #28c840; }
.tab { width: 293px; height: 41px; align-self: flex-end; background: #35363a; border-radius: 10px 10px 0 0; display: flex; align-items: center; padding: 0 14px 0 14px; font-size: 14.600px; font-weight: 500; color: #e6e7e9; }
.fav { width: 20px; height: 20px; margin-right: 9px; }
.close { width: 12px; height: 12px; margin-left: auto; }
.plus { width: 16px; height: 16px; margin: 8px 0 0 18px; }
.chev { width: 12px; height: 8px; margin: 8px 0 0 auto; }

.toolbar { height: 44px; flex: none; display: flex; align-items: center; padding-left: 14px; }
.tool { width: 24px; height: 24px; margin-right: 15px; }
.omnibox { width: 1385px; height: 34px; border-radius: 17px; background: #202326; display: flex; align-items: center; padding: 0 8px 0 12px; font-size: 16.800px; font-weight: 500; color: #eaebec; }
.info { width: 18px; height: 18px; margin-right: 10px; }
.host { margin-left: 1px; }
.port { color: #8f9194; font-weight: 400; letter-spacing: .2px; }
.omni-icons { margin-left: auto; display: flex; gap: 15.500px; }
.omni-icons svg { width: 24px; height: 24px; }
.ext { display: flex; align-items: center; margin-left: 9px; }
.ext svg { width: 39.200px; height: 32px; }
.avatar { width: 27px; height: 27px; margin: 0 6px; border-radius: 50%; background: #8d6e63; color: #f1e9e6; font-size: 13px; text-align: center; line-height: 27px; }

.bookmarks { height: 41px; flex: none; display: flex; align-items: center; gap: 20px; padding: 0 0 6px 15px; border-bottom: 2px solid #555; font-size: 14.400px; font-weight: 500; color: #e8e9eb; }
.bm { display: flex; align-items: center; gap: 10px; }
.bm svg { width: 20px; height: 20px; }
.bm span { white-space: nowrap; display: block; }
.more { margin-left: auto; margin-right: 24px; }

/* site */
.page { flex: 1; display: flex; flex-direction: column; min-height: 0; background: #2b2b2b; font-size: 19px; letter-spacing: -.2px; }
.navbar { height: 80px; flex: none; background: #000; color: #eee; display: flex; align-items: center; justify-content: space-between; padding: 1px 156px 0 131px; }
.brand { font-size: 23.500px; letter-spacing: -.35px; }
.links { display: flex; gap: 49px; }
.scroller { flex: 1; display: flex; min-height: 0; }
.content { flex: 1; display: flex; align-items: flex-start; padding-top: 24px; min-width: 0; }
.gutter { width: 15px; background: #fff; }
.card { background: #1c1a1b; border-radius: 9px; }

.left { width: 431px; margin-right: 29px; }
.leagues { height: 573px; text-align: center; padding-top: 18px; }
h1 { margin: 0 0 40px; font-size: 37.800px; line-height: 50px; letter-spacing: -.500px; font-weight: 700; color: #dedcdd; }
.leagues li { height: 78.200px; display: flex; align-items: flex-start; padding: 5px 0 0 51px; }
.leagues li svg { width: 62px; height: 62px; }
.leagues li span { flex: 1; padding: 3.500px 84px 0 0; line-height: 26px; }
.dropdown { height: 66px; margin-top: 24px; background: #fff; border-radius: 7px; color: #343a40; display: flex; align-items: center; justify-content: space-between; padding: 0 27px 0 25px; }
.dropdown svg { width: 22px; height: 12px; }

.matches { width: 895px; height: 575px; margin-right: 29px; padding: 21px 19px 0; text-align: center; color: #e4e4e4; overflow: hidden; letter-spacing: -.05px; }
.matches label { display: block; line-height: 28px; letter-spacing: -.05px; }
.dateinput { height: 46px; margin-top: 9px; border-radius: 7px; background: #fff; color: #404448; text-align: left; line-height: 47px; padding-left: 16px; letter-spacing: 0; }
.rows { padding: 51px 20px 0 23px; }
.match { height: 59px; margin-bottom: 21.600px; display: grid; grid-template-columns: 227px 62px 211px 62px 1fr; align-items: start; padding-left: 11px; text-align: left; color: #f4f4f4; border-radius: 4px; box-shadow: 0 15px 28px rgba(0, 0, 0, .45); }
.match b { line-height: 26px; white-space: nowrap; font-size: 19.400px; }
.home, .away { padding-top: 6px; }
.away { padding-left: 52px; }
.match .time { text-align: center; font-size: 19.600px; letter-spacing: .15px; }
.crest { width: 62px; height: 62px; margin-top: -3px; }

.players { width: 432px; height: 900px; }
.search { padding-top: 21px; height: 130px; text-align: center; color: #e4e4e4; }
.search label { display: block; line-height: 27px; padding-left: 15px; letter-spacing: -.25px; }
.searchinput { width: 223px; height: 34px; margin-left: 117px; background: #fff; border: 1px solid #3f9482; }
.players ul { width: 444px; margin-left: 3px; }
.players li { height: 70.850px; border-bottom: 2px solid #373536; padding-left: 15px; line-height: 73px; white-space: nowrap; letter-spacing: -.25px; }

/* dock */
.dock { width: 998px; height: 63px; margin: 2px 0 0 424px; border: 1px solid rgba(120, 160, 190, .35); border-radius: 17px; background: linear-gradient(90deg, #0a2a4c, #083358 25%, #0a2c49 42%, #101b26 55%, #0c2a48 66%, #06406f 82%, #093868); display: flex; align-items: flex-start; padding: 8px 0 0 8px; gap: 11.540px; }
.app { width: 41px; height: 41px; position: relative; flex: none; }
.app > svg { width: 41px; height: 41px; }
.run::after { content: ""; position: absolute; left: 18px; bottom: -11px; width: 5px; height: 5px; border-radius: 50%; background: #b4cbe3; }
.badge { position: absolute; top: -5px; right: -5px; height: 19px; min-width: 19px; border-radius: 10px; background: #e53d3c; color: #fff; font-size: 11.500px; line-height: 19px; text-align: center; }
.wide { width: 28px; right: -6px; }
.cal { background: #fbfbfa; border-radius: 9px; overflow: hidden; text-align: center; color: #2c2c2c; display: flex; flex-direction: column; }
.month { background: #f04a46; color: #fff; font-size: 9px; line-height: 13px; font-weight: 600; }
.day { font-size: 24px; line-height: 28px; font-weight: 300; }
.notes { border-radius: 9px; background: linear-gradient(#fdca13 0 11px, #c8c6be 11px 12px, #f4f3f0 12px 20px, #d9d8d5 20px 21px, #f4f3f0 21px 30px, #d9d8d5 30px 31px, #f4f3f0 31px); }
.sep { width: 1px; height: 48px; margin: -1px 5px 0; background: #54718d; flex: none; }
.zoomapp { border-radius: 9px; background: #0b5cf0; color: #fff; font-size: 11px; font-weight: 700; line-height: 40px; text-align: center; }
.app.folder { width: 43px; margin-left: -1px; } .folder > svg { width: 43px; height: 46px; margin-top: -4px; }
.app.trash { width: 36px; margin-left: 2px; } .trash > svg { width: 36px; height: 48px; margin-top: -4px; }

.ghost { position: absolute; left: 934px; top: 588px; color: #000; font-size: 42px; line-height: 54px; font-weight: 500; letter-spacing: -1.200px; }
.cursor { position: absolute; left: 760px; top: 392px; width: 15px; height: 23px; }

/* lettering inside badges */
.t-ims { font: 700 6px Inter, sans-serif; fill: #fff; }
.t-lg { font: 800 6.500px Inter, sans-serif; fill: #fff; }
.t-ub { font: 500 6.600px Inter, sans-serif; fill: #e4e8ee; }
.t-sa { font: 800 6.500px Inter, sans-serif; fill: #1c3766; }
.t-tim { font: 800 8px Inter, sans-serif; }
.t-ll { font: 700 9px Inter, sans-serif; fill: #111; stroke: #3a3939; stroke-width: .4px; }
.t-sn { font: 700 9px Inter, sans-serif; fill: #d8343c; }
.t-two { font: 900 27px "DejaVu Sans", sans-serif; fill: #fff; }
.t-bl { font: 900 9.500px Inter, sans-serif; fill: #050505; }
.t-sv { font: 900 22px Inter, sans-serif; fill: #060606; }
.t-sh { font: 500 5.500px Inter, sans-serif; fill: #ccc; }
.t-19 { font: 600 8px Inter, sans-serif; fill: #ddd; }
.t-ha { font: 800 5.800px Inter, sans-serif; fill: #fff; }
.t-1fc { font: 800 18px Inter, sans-serif; }
.t-mg { font: 700 10px "Liberation Sans", sans-serif; letter-spacing: 0; }
.t-n1 { font: 500 19px "Liberation Sans", sans-serif; fill: #fff; }
.t-fcn { font: 700 23px "Liberation Sans", sans-serif; fill: #fff; }
.t-rc { font: 800 4.500px Inter, sans-serif; fill: #111; }
.t-rcl { font: 900 14px Inter, sans-serif; fill: #fff; }
.t-s { font: 900 11.500px Inter, sans-serif; }
.t-st { font: 700 8.500px Inter, sans-serif; }
.t-us { font: 700 6px "Liberation Serif", serif; fill: #cdb392; }
.t-le { font: 700 9px "Liberation Serif", serif; fill: #cdb392; }
```
